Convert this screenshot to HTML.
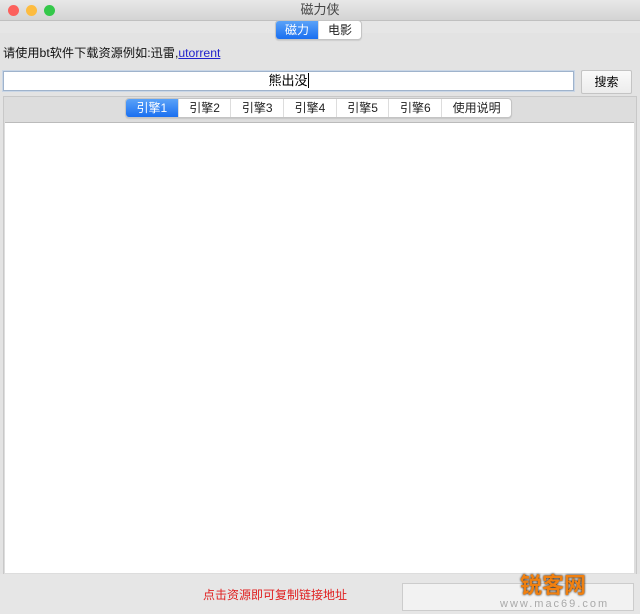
<!DOCTYPE html>
<html><head><meta charset="utf-8"><style>
body{margin:0;width:640px;height:614px;background:#e6e6e6;font-family:"Liberation Sans","Noto Sans CJK SC",sans-serif;font-size:12px;position:relative;overflow:hidden}
.abs{position:absolute}
.title{left:0;top:0;width:640px;height:20px;background:linear-gradient(#e8e8e8,#d4d4d4);border-bottom:1px solid #c0c0c0;text-align:center;line-height:20px;font-size:13px;color:#444}
.dot{top:5px;width:11px;height:11px;border-radius:50%}
.seg{display:flex;border:1px solid #c4c4c4;border-radius:4px;background:#fff;overflow:hidden;box-shadow:0 1px 1px rgba(0,0,0,.1)}
.seg div{padding:0 10.5px;border-right:1px solid #ddd;line-height:18px;font-size:12px;color:#222}
.seg .on{background:linear-gradient(#5aa2f8,#1a6ff0);color:#fff}
</style></head><body>
<div class="abs title">磁力侠</div>
<div class="abs dot" style="left:8px;background:#fc605c"></div>
<div class="abs dot" style="left:26px;background:#fdbc40"></div>
<div class="abs dot" style="left:44px;background:#34c84a"></div>
<div class="abs" style="left:0;top:33px;width:640px;height:581px;background:#e3e3e3"></div>
<div class="abs seg" style="left:275px;top:20px"><div class="on" style="padding:0 9px">磁力</div><div style="border:none;padding:0 9px">电影</div></div>
<div class="abs" style="left:3px;top:43px;font-size:12.2px;color:#111">请使用bt软件下载资源例如:迅雷,<span style="color:#2222cc;text-decoration:underline">utorrent</span></div>
<div class="abs" style="left:3px;top:71px;width:569px;height:18px;background:#fff;border:1px solid #9fb3cc;box-shadow:0 0 0 1px #c9d6e6;text-align:center;line-height:18px;font-size:13px">熊出没<span style="border-left:1px solid #000"></span></div>
<div class="abs" style="left:581px;top:70px;width:49px;height:22px;background:linear-gradient(#fafafa,#ececec);border:1px solid #c4c4c4;border-radius:2px;text-align:center;line-height:22px">搜索</div>
<div class="abs" style="left:3px;top:96px;width:632px;height:477px;border:1px solid #c8c8c8;background:#ddd"></div>
<div class="abs" style="left:5px;top:122px;width:629px;height:450px;background:#fff;border-top:1px solid #bbb"></div>
<div class="abs seg" style="left:125px;top:98px"><div class="on">引擎1</div><div>引擎2</div><div>引擎3</div><div>引擎4</div><div>引擎5</div><div>引擎6</div><div style="border:none">使用说明</div></div>
<div class="abs" style="left:0;top:574px;width:640px;height:40px;background:#e6e6e6"></div>
<div class="abs" style="left:203px;top:586px;color:#e02020;font-size:12px">点击资源即可复制链接地址</div>
<div class="abs" style="left:402px;top:583px;width:230px;height:26px;background:#f2f2f2;border:1px solid #ccc"></div>
<div class="abs" style="left:520px;top:568px;font-size:22px;font-weight:bold;color:#f08010;text-shadow:0 0 2px #000">锐客网</div>
<div class="abs" style="left:500px;top:598px;font-size:11px;color:#aaa;letter-spacing:2px">www.mac69.com</div>
</body></html>
